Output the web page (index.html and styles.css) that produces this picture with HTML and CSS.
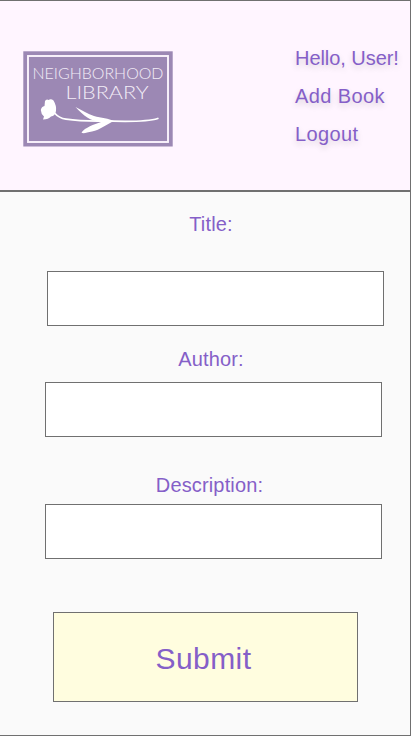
FILE: index.html
```html
<!DOCTYPE html>
<html lang="en">
<head>
  <meta charset="utf-8">
  <title>Neighborhood Library</title>
  <link rel="stylesheet" href="styles.css">
</head>
<body>
  <div class="app">
    <header class="header">
      <svg class="logo" viewBox="0 0 150 96" role="img" aria-label="Neighborhood Library">
        <rect class="logo-bg" x="0.300" y="0.300" width="149.400" height="95.200"/>
        <rect class="logo-frame" x="5" y="5" width="140" height="86"/>
        <text class="logo-text" x="9.5" y="27.5" font-size="15.5" textLength="131" lengthAdjust="spacingAndGlyphs">NEIGHBORHOOD</text>
        <text class="logo-text" x="42.500" y="48.200" font-size="18.5" textLength="83" lengthAdjust="spacingAndGlyphs">LIBRARY</text>
        <path class="logo-shape" d="M22 50Q23.500 47.500 25.500 49Q28 47.500 30.500 49.500Q33.800 55 33 60Q32 65 28 65.500Q25.500 68.500 20 68.500L21 65.500Q18 63 17.800 59Q18.500 55.500 21.500 55Z"/>
        <path class="logo-stem" d="M31.500 62C35 66 38 67.500 43 68.200C61 71 74 69.800 90 70.200S124 71 134.800 67.500"/>
        <path class="logo-shape" d="M52.500 56C59 59.500 65 63 71 65C78 67 86 67.500 91 70C84 73 77 79 69 80.500C64 81.500 60 83 58.500 81.500C62 76.500 71 73.500 78 71C67 70 61 65 52.500 56Z"/>
      </svg>
      <nav class="nav">
        <a class="nav-link greeting">Hello, User!</a>
        <a class="nav-link">Add Book</a>
        <a class="nav-link">Logout</a>
      </nav>
    </header>
    <form class="form">
      <label class="label label-title" for="title">Title:</label>
      <input class="field field-title" id="title" type="text">
      <label class="label label-author" for="author">Author:</label>
      <input class="field" id="author" type="text">
      <label class="label label-description" for="description">Description:</label>
      <input class="field field-description" id="description" type="text">
      <button class="submit" type="button">Submit</button>
    </form>
  </div>
</body>
</html>
```
FILE: styles.css
```css
* {
  box-sizing: border-box;
}

body {
  margin: 0;
  background: #fff;
  color: #855fc8;
  font: 20px/24px "Liberation Sans", Arial, sans-serif;
}

.app {
  width: 411px;
  height: 736px;
  border: 1px solid #707070;
  border-left: 0;
  background: #fafafa;
}

.header {
  display: flex;
  justify-content: space-between;
  height: 191px;
  padding: 38px 0 0 23px;
  border-bottom: 2px solid #707070;
  background: #fff5ff;
}

.logo {
  width: 150px;
  height: 96px;
  margin-top: 12px;
}

.logo-bg {
  fill: #9c88b4;
}

.logo-frame {
  fill: none;
  stroke: #fbf4fc;
  stroke-width: 1.9;
}

.logo-text {
  fill: #f3edf7;
  font-family: Lato, sans-serif;
  font-weight: 300;
}

.logo-shape {
  fill: #fff;
}

.logo-stem {
  fill: none;
  stroke: #fff;
  stroke-width: 1.8;
  stroke-linecap: round;
}

.nav {
  display: flex;
  flex-direction: column;
  width: 115px;
}

.nav-link {
  letter-spacing: 0.4px;
  line-height: 38px;
  white-space: nowrap;
  text-shadow: 0 3px 6px rgba(0, 0, 0, 0.16);
}

.greeting {
  letter-spacing: -0.05px;
}

.form {
  display: flex;
  flex-direction: column;
}

.label {
  letter-spacing: 0.15px;
  text-align: center;
}

.label-title {
  margin: 20px 0 35px 12px;
}

.label-author {
  margin: 21px 0 11px 12px;
}

.label-description {
  margin: 36px 0 7px 9px;
}

.field {
  width: 337px;
  height: 55px;
  margin: 0 0 0 45px;
  padding: 0 12px;
  border: 1px solid #707070;
  border-radius: 0;
  outline: 0;
  background: #fff;
  color: inherit;
  font: inherit;
}

.field-title {
  margin-left: 47px;
}

.submit {
  width: 305px;
  height: 90px;
  margin: 53px 0 0 53px;
  padding: 3px 4px 0 0;
  border: 1px solid #707070;
  border-radius: 0;
  background: #fffddf;
  color: inherit;
  font: 30px "Liberation Sans", Arial, sans-serif;
  letter-spacing: 0.4px;
}
```
